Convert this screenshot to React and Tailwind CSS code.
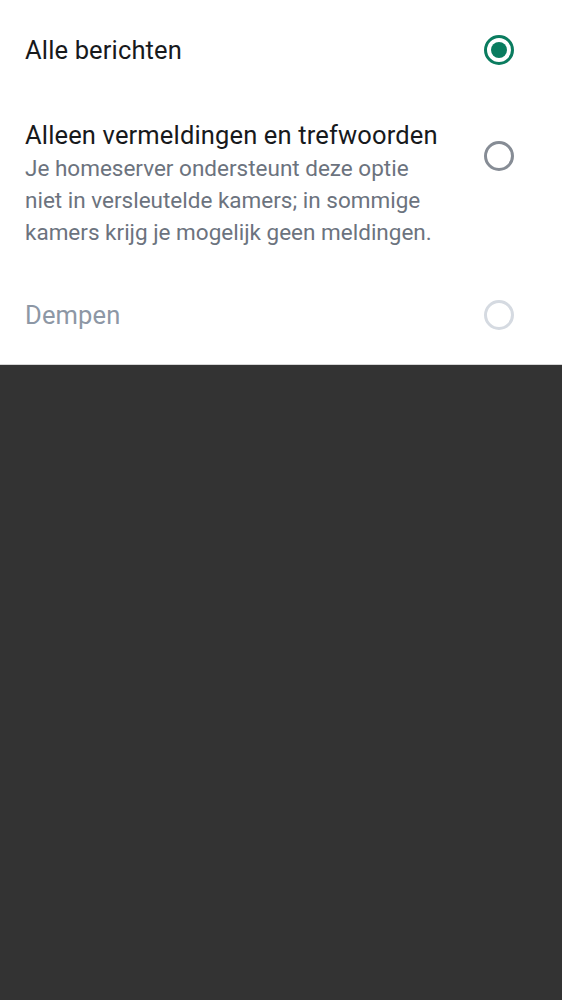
const Radio = ({ state }) => {
  if (state === 'checked') {
    return (
      <div className="flex h-[30px] w-[30px] shrink-0 items-center justify-center rounded-full border-[3px] border-[#0a7c5f]">
        <div className="h-[16px] w-[16px] rounded-full bg-[#0a7c5f]" />
      </div>
    );
  }
  return (
    <div
      className={
        state === 'disabled'
          ? 'h-[30px] w-[30px] shrink-0 rounded-full border-[3px] border-[#d5dae1]'
          : 'h-[30px] w-[30px] shrink-0 rounded-full border-[3px] border-[#868c95]'
      }
    />
  );
};

export default function App() {
  return (
    <div className="flex h-screen w-full flex-col bg-[#333333] font-['Roboto',sans-serif]">
      <div className="w-full border-b border-[#d6d6d6] bg-white">
        {/* alle berichten */}
        <div className="flex h-[100px] items-center justify-between pl-[25px] pr-[48px]">
          <span className="text-[25.5px] leading-[32px] tracking-[0.15px] text-[#17191c]">Alle berichten</span>
          <Radio state="checked" />
        </div>

        {/* alleen vermeldingen */}
        <div className="flex items-start justify-between pb-[18px] pl-[25px] pr-[48px] pt-[19px]">
          <div className="flex flex-col">
            <span className="whitespace-nowrap text-[25.5px] leading-[33px] tracking-[0.15px] text-[#17191c]">
              Alleen vermeldingen en trefwoorden
            </span>
            <p className="whitespace-nowrap text-[22.5px] leading-[32px] text-[#6c737e]">
              Je homeserver ondersteunt deze optie
              <br />
              niet in versleutelde kamers; in sommige
              <br />
              kamers krijg je mogelijk geen meldingen.
            </p>
          </div>
          <div className="mt-[22px]">
            <Radio state="unchecked" />
          </div>
        </div>

        {/* dempen */}
        <div className="flex h-[98px] items-center justify-between pl-[25px] pr-[48px]">
          <span className="text-[25.5px] leading-[32px] tracking-[0.15px] text-[#8d97a5]">Dempen</span>
          <Radio state="disabled" />
        </div>
      </div>
      <div className="flex-1" />
    </div>
  );
}
